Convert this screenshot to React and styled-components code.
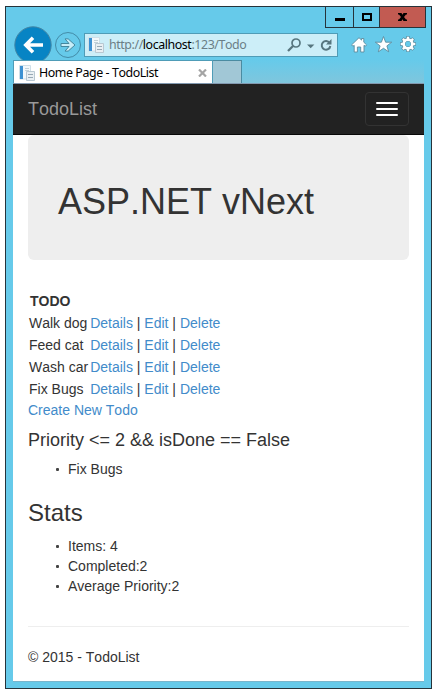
import React from "react";
import styled, { createGlobalStyle } from "styled-components";

const Global = createGlobalStyle`
  * { box-sizing: border-box; }
  body { margin: 0; background: #fff; font-kerning: none; }
`;

const Frame = styled.div`
  display: flex;
  flex-direction: column;
  width: 427px;
  height: 683px;
  margin: 6px 0 0 5px;
  border: 1px solid #26333a;
  background: #66caea;
  padding: 0 7px 6px 7px;
`;

const TitleBar = styled.div`
  display: flex;
  justify-content: flex-end;
  height: 21px;
  flex: none;
  margin-right: -2px;
`;

const WindowButton = styled.button`
  display: flex;
  align-items: center;
  justify-content: center;
  width: ${(p) => p.$width}px;
  height: 21px;
  padding: 0;
  border: solid #26333a;
  border-width: 0 ${(p) => (p.$danger ? 1 : 0)}px 1px 1px;
  background: ${(p) => (p.$danger ? "#c25b52" : "#66caea")};
`;

const Toolbar = styled.div`
  display: flex;
  height: 32px;
  flex: none;
  align-items: flex-start;
`;

const NavIcons = styled.svg`
  display: block;
  flex: none;
  width: 71px;
  height: 32px;
  overflow: visible;
`;

const AddressBar = styled.div`
  display: flex;
  align-items: center;
  width: 254px;
  height: 24px;
  margin-top: 5px;
  padding: 0 4px 0 3px;
  border: 1px solid #4f9cb7;
  background: #cceef8;
  flex: none;
`;

const Url = styled.span`
  flex: 1;
  margin-left: 5px;
  font: 12.4px/18px "Noto Sans", sans-serif;
  font-kerning: none;
  letter-spacing: -0.42px;
  color: #6b7e86;
  white-space: nowrap;
`;

const Host = styled.span`
  color: #000;
`;

const Icon = styled.svg`
  display: block;
  flex: none;
`;

const Tools = styled.svg`
  display: block;
  flex: none;
  width: 66px;
  height: 20px;
  margin: 7px 0 0 13px;
`;

const TabStrip = styled.div`
  display: flex;
  height: 24px;
  flex: none;
  background: linear-gradient(#66caea, #7fc6dd);
  border-bottom: 1px solid #8299b0;
`;

const Tab = styled.div`
  display: flex;
  align-items: center;
  width: 200px;
  height: 23px;
  padding: 1px 5px 0 5px;
  border: 1px solid #4f9cb7;
  border-width: 1px 1px 0 1px;
  background: #fff;
`;

const TabTitle = styled.span`
  flex: 1;
  margin-left: 4px;
  font: 12.4px/18px "Noto Sans", sans-serif;
  font-kerning: none;
  letter-spacing: -0.42px;
  color: #000;
  white-space: nowrap;
`;

const NewTab = styled.div`
  width: 29px;
  height: 23px;
  border: 1px solid #4b8ba1;
  border-width: 1px 1px 0 0;
  background: #a1c7d6;
`;

const Page = styled.div`
  flex: 1;
  min-height: 0;
  background: #fff;
  border-bottom: 1px solid #79b5cc;
  font: 14px/20px "Liberation Sans", Arial, sans-serif;
  font-kerning: none;
  color: #333;
`;

const Navbar = styled.nav`
  display: flex;
  justify-content: space-between;
  align-items: center;
  height: 51px;
  padding: 0 15px;
  background: #222;
  border-bottom: 1px solid #080808;
`;

const Brand = styled.a`
  font-size: 18px;
  line-height: 20px;
  color: #999;
`;

const Toggle = styled.button`
  display: flex;
  flex-direction: column;
  gap: 4px;
  width: 44px;
  height: 34px;
  padding: 9px 10px;
  border: 1px solid #333;
  border-radius: 4px;
  background: transparent;
`;

const Bar = styled.span`
  display: block;
  height: 2px;
  border-radius: 1px;
  background: #fff;
`;

const Container = styled.main`
  padding: 0 15px;
`;

const Jumbotron = styled.section`
  height: 125px;
  padding: 47px 30px 0;
  border-radius: 6px;
  background: #eee;
`;

const Title = styled.h1`
  margin: 0;
  font-size: 36px;
  line-height: 40px;
  font-weight: 400;
`;

const TodoTable = styled.table`
  margin-top: 30px;
  border-collapse: collapse;
`;

const HeadCell = styled.th`
  height: 22px;
  padding: 1px 2px;
  text-align: left;
  white-space: nowrap;
`;

const Cell = styled.td`
  height: 22px;
  padding: 1px 1px;
  min-width: ${(p) => (p.$name ? 61 : 0)}px;
  white-space: nowrap;
`;

const Link = styled.a`
  color: #428bca;
`;

const CreateLine = styled.div`
  height: 20px;
`;

const Priority = styled.h4`
  margin: 10px 0 9px;
  font-size: 18px;
  line-height: 20px;
  font-weight: 400;
`;

const Stats = styled.h2`
  margin: 21px 0 10px;
  font-size: 24px;
  line-height: 26px;
  font-weight: 400;
`;

const List = styled.ul`
  margin: 0;
  padding: 0 0 0 28px;
  list-style: none;
`;

const Item = styled.li`
  display: flex;
  align-items: center;
  gap: 9px;
  height: 20px;

  &::before {
    content: "";
    width: 3px;
    height: 3px;
    border-radius: 1px;
    background: #444;
  }
`;

const Rule = styled.hr`
  margin: 30px 0 20px;
  border: 0;
  border-top: 1px solid #eee;
`;

const Footer = styled.footer`
  height: 20px;
`;

const todos = ["Walk dog", "Feed cat", "Wash car", "Fix Bugs"];
const gearAngles = [0, 45, 90, 135, 180, 225, 270, 315];

function PageIcon() {
  return (
    <Icon width="16" height="16" viewBox="0 0 16 16">
      <path d="M.5.5h11v13.5H.5z" fill="#f3f8fb" stroke="#cfdfe8" />
      <rect x="1" y="1" width="3" height="13" fill="#3d91d2" />
      <path d="M6 3.5h4M6 5.5h4" stroke="#c3d1d8" />
      <path d="M7.5 6.5h8v9h-8z" fill="#e9eff3" stroke="#b9c8d2" />
      <path d="M9 9.5h5M9 12.5h5" stroke="#98a9b5" />
    </Icon>
  );
}

function Navigation() {
  return (
    <NavIcons viewBox="0 0 71 32">
      <circle cx="20" cy="17" r="18.2" fill="#0784c4" stroke="#4286a5" />
      <path d="M12.5 17H30M20 9.8L12.8 17l7.2 7.2" fill="none" stroke="#fff" strokeWidth="3.6" />
      <circle cx="55" cy="17" r="12.5" fill="#66caea" stroke="#438ca8" />
      <path d="M48 15.5h8l-4-4.6h3.2l6.8 6.1-6.8 6.1H52l4-4.6h-8z" fill="#c7edf8" stroke="#45889f" />
    </NavIcons>
  );
}

export default function App() {
  return (
    <>
      <Global />
      <Frame>
        <TitleBar>
          <WindowButton $width={28}>
            <Icon width="10" height="10"><path d="M0 6h10v3H0z" /></Icon>
          </WindowButton>
          <WindowButton $width={26}>
            <Icon width="10" height="8"><path d="M1 1h8v6H1z" fill="none" stroke="#000" strokeWidth="2" /></Icon>
          </WindowButton>
          <WindowButton $width={47} $danger>
            <Icon width="9" height="8">
              <path d="M0 0h3.5l1 1.7 1-1.7H9v1.5H8L6 4l2 2.5h1V8H5.5l-1-1.7-1 1.7H0V6.5h1L3 4 1 1.5H0z" />
            </Icon>
          </WindowButton>
        </TitleBar>
        <Toolbar>
          <Navigation />
          <AddressBar>
            <PageIcon />
            <Url>http://<Host>localhost</Host>:123/Todo</Url>
            <Icon width="46" height="16" viewBox="0 0 46 16">
              <g fill="none" stroke="#57767f">
                <circle cx="9" cy="6" r="4" strokeWidth="1.7" />
                <path d="M6 9L1 14" strokeWidth="2.3" />
                <path d="M42.6 6A4.3 4.3 0 1 0 43.3 9" strokeWidth="2" />
              </g>
              <path d="M20 7.5h7.4l-3.7 3.8zM44.5 2v5.5h-5.5z" fill="#57767f" />
            </Icon>
          </AddressBar>
          <Tools viewBox="0 0 66 20">
            <g fill="#fff" stroke="#5b8b9d" strokeWidth=".9">
              <path d="M.7 9.8L8 2.7l2.6 2.4V3.5h2.2v3.7l2.7 2.6-1.2 1.5-1.3-1V17H9.7v-5H6.4v5H3.2v-6.7l-1.3 1z" />
              <path d="M32.5 1.5l2.1 5.7h6.1l-4.8 3.7 1.8 5.9-5.2-3.5-5.2 3.5 1.8-5.9-4.8-3.7h6.1z" />
            </g>
            <g fill="none" stroke="#5b8b9d">
              {gearAngles.map((a) => (
                <path key={a} d="M57 6V1.1" strokeWidth="3.6" transform={`rotate(${a} 57 9)`} />
              ))}
              <circle cx="57" cy="9" r="4.4" strokeWidth="4" />
            </g>
            <g fill="none" stroke="#fff">
              {gearAngles.map((a) => (
                <path key={a} d="M57 6V1.7" strokeWidth="2.3" transform={`rotate(${a} 57 9)`} />
              ))}
              <circle cx="57" cy="9" r="4.4" strokeWidth="2.5" />
            </g>
            <circle cx="57" cy="9" r="2.5" fill="#66caea" />
          </Tools>
        </Toolbar>
        <TabStrip>
          <Tab>
            <PageIcon />
            <TabTitle>Home Page - TodoList</TabTitle>
            <Icon width="9" height="8"><path d="M1 .5l7 7M8 .5l-7 7" stroke="#a5a5a5" strokeWidth="2.2" /></Icon>
          </Tab>
          <NewTab />
        </TabStrip>
        <Page>
          <Navbar>
            <Brand>TodoList</Brand>
            <Toggle><Bar /><Bar /><Bar /></Toggle>
          </Navbar>
          <Container>
            <Jumbotron><Title>ASP.NET vNext</Title></Jumbotron>
            <TodoTable>
              <thead><tr><HeadCell>TODO</HeadCell><HeadCell /></tr></thead>
              <tbody>
                {todos.map((name) => (
                  <tr key={name}>
                    <Cell $name>{name}</Cell>
                    <Cell><Link>Details</Link> | <Link>Edit</Link> | <Link>Delete</Link></Cell>
                  </tr>
                ))}
              </tbody>
            </TodoTable>
            <CreateLine><Link>Create New Todo</Link></CreateLine>
            <Priority>Priority &lt;= 2 &amp;&amp; isDone == False</Priority>
            <List><Item>Fix Bugs</Item></List>
            <Stats>Stats</Stats>
            <List>
              <Item>Items: 4</Item>
              <Item>Completed:2</Item>
              <Item>Average Priority:2</Item>
            </List>
            <Rule />
            <Footer>© 2015 - TodoList</Footer>
          </Container>
        </Page>
      </Frame>
    </>
  );
}
